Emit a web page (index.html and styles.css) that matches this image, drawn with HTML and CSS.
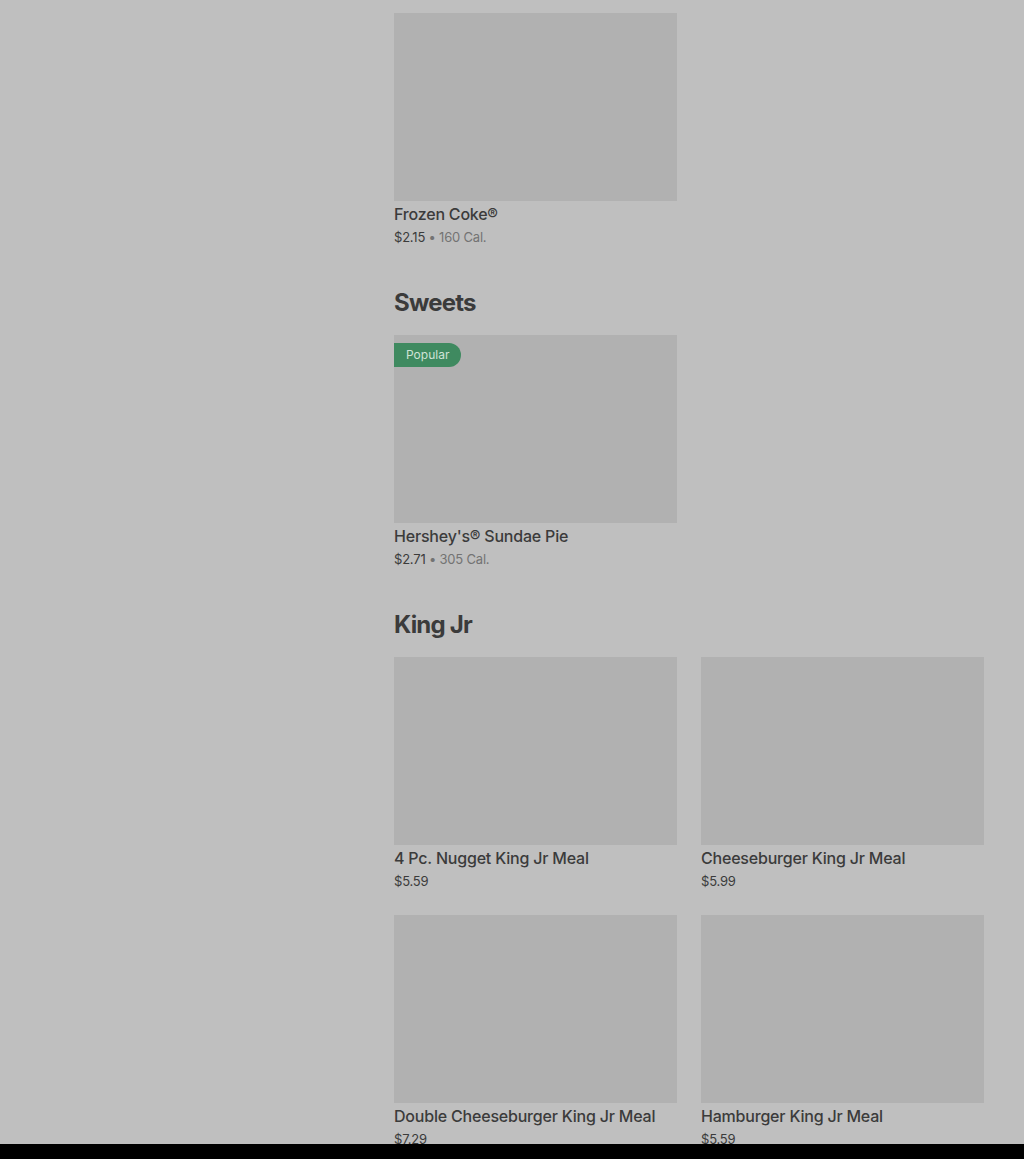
FILE: index.html
```html
<!DOCTYPE html>
<html lang="en">
<head>
  <meta charset="UTF-8" />
  <meta name="viewport" content="width=device-width, initial-scale=1.0"/>
  <title>Menu</title>
  <link rel="stylesheet" href="styles.css">
</head>
<body>
  <div class="menu">
    <section class="section first">
      <div class="grid">
        <div class="item">
          <div class="photo"></div>
          <div class="name">Frozen Coke®</div>
          <div class="meta">$2.15 <span class="cal">• 160 Cal.</span></div>
        </div>
      </div>
    </section>

    <section class="section">
      <h2>Sweets</h2>
      <div class="grid">
        <div class="item">
          <div class="photo">
            <span class="badge">Popular</span>
          </div>
          <div class="name">Hershey's® Sundae Pie</div>
          <div class="meta">$2.71 <span class="cal">• 305 Cal.</span></div>
        </div>
      </div>
    </section>

    <section class="section">
      <h2>King Jr</h2>
      <div class="grid">
        <div class="item">
          <div class="photo"></div>
          <div class="name">4 Pc. Nugget King Jr Meal</div>
          <div class="meta">$5.59</div>
        </div>
        <div class="item">
          <div class="photo"></div>
          <div class="name">Cheeseburger King Jr Meal</div>
          <div class="meta">$5.99</div>
        </div>
        <div class="item">
          <div class="photo"></div>
          <div class="name">Double Cheeseburger King Jr Meal</div>
          <div class="meta">$7.29</div>
        </div>
        <div class="item">
          <div class="photo"></div>
          <div class="name">Hamburger King Jr Meal</div>
          <div class="meta">$5.59</div>
        </div>
      </div>
    </section>
  </div>

  <div class="bottom-bar"></div>
</body>
</html>
```

FILE: styles.css
```css
* {
  box-sizing: border-box;
}
body {
  margin: 0;
  background-color: #bfbfbf;
  font-family: 'Inter', 'Liberation Sans', sans-serif;
  color: #3b3b3b;
  height: 1159px;
  overflow: hidden;
}
.menu {
  width: 590px;
  margin-left: 394px;
  padding-top: 13px;
}
.section {
  padding-top: 38px;
}
.section.first {
  padding-top: 0;
}
.section h2 {
  margin: 0 0 14px;
  font-size: 24px;
  line-height: 36px;
  font-weight: 700;
  letter-spacing: -0.8px;
}
.grid {
  display: grid;
  grid-template-columns: 283px 283px;
  column-gap: 24px;
  row-gap: 24px;
}
.photo {
  position: relative;
  height: 188px;
  background-color: #b1b1b1;
}
.badge {
  position: absolute;
  top: 8px;
  left: 0;
  height: 24px;
  padding: 0 12px;
  background-color: #3f8a60;
  color: #cfe3d6;
  font-size: 12px;
  line-height: 24px;
  border-radius: 0 12px 12px 0;
}
.name {
  margin-top: 1px;
  font-size: 16px;
  line-height: 24px;
  font-weight: 500;
  letter-spacing: -0.2px;
}
.meta {
  padding-top: 1px;
  font-size: 13px;
  line-height: 20px;
  letter-spacing: -0.2px;
  color: #3b3b3b;
}
.cal {
  color: #737373;
}
.bottom-bar {
  position: fixed;
  left: 0;
  right: 0;
  bottom: 0;
  height: 15px;
  background-color: #000;
}
```
